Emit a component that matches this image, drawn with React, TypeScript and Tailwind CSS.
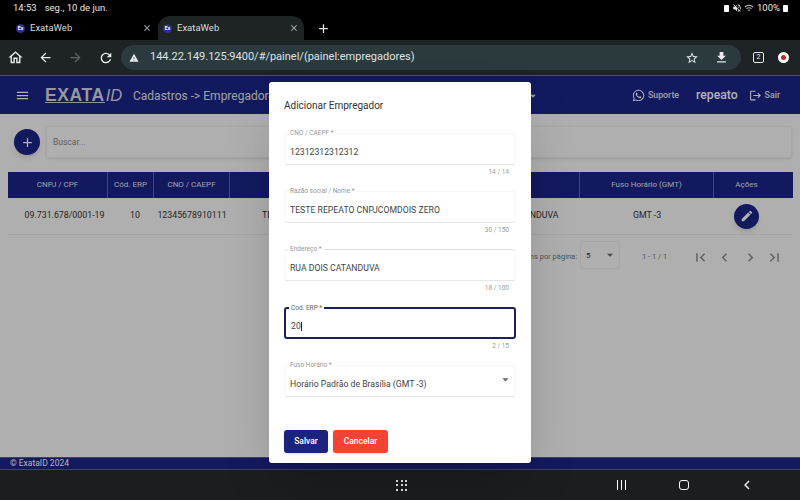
import React from 'react';
import { FaWhatsapp } from 'react-icons/fa';
import {
  MdAdd,
  MdArrowBack,
  MdArrowDropDown,
  MdArrowForward,
  MdChevronLeft,
  MdChevronRight,
  MdClose,
  MdEdit,
  MdFileDownload,
  MdFirstPage,
  MdLastPage,
  MdLogout,
  MdMenu,
  MdOutlineHome,
  MdOutlineWifi,
  MdRefresh,
  MdStarBorder,
  MdVolumeOff,
  MdWarning,
} from 'react-icons/md';

const Favicon: React.FC = () => (
  <span className="flex h-[9px] w-[9px] items-center justify-center rounded-full bg-[#2b2f8f] text-[5px] font-bold leading-none text-white">
    Ex
  </span>
);

const BrowserTab: React.FC<{ active?: boolean }> = ({ active }) => (
  <div
    className={`flex h-[24px] w-[146px] items-center rounded-t-xl px-[5px] ${
      active ? 'bg-[#1e2326]' : ''
    }`}
  >
    <Favicon />
    <span className="ml-[5px] flex-1 text-[9.5px] text-[#d9dcde]">ExataWeb</span>
    <MdClose className="text-[10px] text-[#b8bcbf]" />
  </div>
);

const Field: React.FC<{
  label: string;
  value?: string;
  hint?: string;
  focused?: boolean;
  select?: boolean;
  line?: boolean;
}> = ({ label, value, hint, focused, select, line }) => (
  <div className="h-[58px]">
    <div
      className={`relative flex h-[32px] items-center rounded-[3px] px-[5px] ${
        focused
          ? 'border-2 border-[#1a1f5e]'
          : 'border border-[#f7f7f7] border-b-[#e6e6e6]'
      } ${line ? 'border-t-[#e2e2e2]' : ''}`}
    >
      <span
        className={`absolute left-[3px] top-[-5px] bg-white px-[2px] text-[6.5px] leading-[8px] ${
          focused ? 'text-[#666]' : 'text-[#999]'
        }`}
      >
        {label}
      </span>
      <span className="flex-1 pt-[5px] text-[8.7px] leading-[12px] text-[#444]">
        {value}
        {focused && <span className="ml-[0.5px] inline-block h-[9px] w-px bg-[#1a1f5e] align-middle" />}
      </span>
      {select && <MdArrowDropDown className="mb-[3px] mr-[-3px] text-[15px] text-[#666]" />}
    </div>
    {hint && <div className="mt-[3px] pr-[7px] text-right text-[6.5px] leading-[8px] text-[#9a9a9a]">{hint}</div>}
  </div>
);

const columns = [
  { title: 'CNPJ / CPF', value: '09.731.678/0001-19', width: 'w-[100px]', cell: 'pl-[13px]' },
  { title: 'Cód. ERP', value: '10', width: 'w-[46px]', cell: 'pl-[8px]' },
  { title: 'CNO / CAEPF', value: '12345678910111', width: 'w-[76px]', cell: '' },
  { title: 'Razão social / Nome', value: 'TESTE REPEATO CNPJCOMDOIS ZERO', width: 'w-[216px]', cell: '' },
  { title: 'Endereço', value: 'RUA DOIS CATANDUVA', width: 'w-[134px]', cell: '' },
  { title: 'Fuso Horário (GMT)', value: 'GMT -3', width: 'w-[134px]', cell: '' },
];

export default function App() {
  return (
    <div className="flex h-[500px] w-[800px] flex-col overflow-hidden bg-black font-['Roboto',sans-serif]">
      {/* android status bar */}
      <div className="flex h-[16px] items-center justify-between pl-[13px] pr-[12px] text-[9.5px] text-[#e8e8e8]">
        <div className="flex gap-[8px]">
          <span>14:53</span>
          <span>seg., 10 de jun.</span>
        </div>
        <div className="flex items-center">
          <span className="h-[7px] w-[5px] rounded-[1px] bg-white" />
          <MdVolumeOff className="ml-[3px] text-[10px]" />
          <MdOutlineWifi className="ml-[2px] text-[10px] text-[#aaa]" />
          <span className="ml-[3px]">100%</span>
          <span className="ml-[3px] h-[7px] w-[5px] rounded-[1px] bg-white" />
        </div>
      </div>

      {/* tabs */}
      <div className="flex h-[24px] items-center pl-[11px]">
        <BrowserTab />
        <div className="ml-[1px]">
          <BrowserTab active />
        </div>
        <MdAdd className="ml-[12px] text-[15px] text-[#e8e8e8]" />
      </div>

      {/* browser toolbar */}
      <div className="flex h-[36px] items-center border-b border-[#4a4f66] bg-[#1e2326] text-[#e8eaed]">
        <MdOutlineHome className="ml-[7px] text-[17px]" />
        <MdArrowBack className="ml-[14px] text-[15px]" />
        <MdArrowForward className="ml-[15px] text-[15px] text-[#5f6468]" />
        <MdRefresh className="ml-[15px] text-[16px]" />
        <div className="ml-[7px] flex h-[25px] w-[620px] items-center rounded-full bg-[#2b3a3d] pl-[8px] pr-[12px]">
          <MdWarning className="text-[10px]" />
          <span className="ml-[11px] flex-1 text-[11px] text-[#dfe3e5]">144.22.149.125:9400/#/painel/(painel:empregadores)</span>
          <MdStarBorder className="text-[14px]" />
          <MdFileDownload className="ml-[15px] text-[15px]" />
        </div>
        <span className="ml-[12px] flex h-[11px] w-[11px] items-center justify-center rounded-[2px] border border-[#e8eaed] text-[7px]">
          2
        </span>
        <span className="ml-[14px] flex h-[11px] w-[11px] items-center justify-center rounded-full bg-white">
          <span className="h-[5px] w-[5px] rounded-full bg-[#c62828]" />
        </span>
      </div>

      {/* page */}
      <div className="relative flex flex-1 flex-col bg-[#ffffff]">
        <header className="flex h-[38px] items-center bg-[#1a2488] pl-[15px] pr-[20px] pt-[1px] text-white">
          <MdMenu className="text-[15px]" />
          <div className="ml-[15px] flex w-[78px] items-baseline">
            <span className="border-b border-white/80 font-['Liberation_Sans',sans-serif] text-[17.5px] font-bold leading-[14px] tracking-[0.6px] text-[#d8d8e8]">EXATA</span>
            <span className="ml-[1px] font-['Liberation_Sans',sans-serif] text-[16.5px] italic leading-[14px] text-[#d8d8e8]">ID</span>
          </div>
          <span className="ml-[10px] w-[393px] whitespace-nowrap text-[12px] text-[#e4e4ee]">Cadastros -&gt; Empregadores</span>
          <MdArrowDropDown className="text-[14px] text-[#ddd]" />
          <div className="flex-1" />
          <FaWhatsapp className="text-[13px]" />
          <span className="ml-[3px] text-[8.8px] font-medium text-[#e4e4ee]">Suporte</span>
          <span className="ml-[17px] text-[12.2px] font-medium">repeato</span>
          <MdLogout className="ml-[11px] text-[13px]" />
          <span className="ml-[3px] text-[8.8px] font-medium text-[#e4e4ee]">Sair</span>
        </header>

        <main className="flex-1 bg-[#fbfbfb] px-[8px]">
          <div className="mt-[12px] flex items-center">
            <button className="ml-[6px] flex h-[26px] w-[26px] items-center justify-center rounded-full bg-[#1a2488] text-white shadow-md">
              <MdAdd className="text-[15px]" />
            </button>
            <div className="ml-[6px] flex h-[32px] flex-1 items-center rounded-[3px] border border-[#f0f0f0] px-[6px] text-[8.5px] text-[#888] shadow-sm">
              Buscar...
            </div>
          </div>

          <div className="mt-[14px] flex">
            {columns.map((col) => (
              <div key={col.title} className={`${col.width} shrink-0`}>
                <div className="flex h-[26px] items-center justify-center border-r border-white/30 bg-[#1a2488] text-[8px] text-[#e4e4ee]">
                  {col.title}
                </div>
                <div className={`flex h-[37px] items-center justify-center whitespace-nowrap border-b border-[#eee] text-[8.8px] text-[#333] ${col.cell}`}>
                  {col.value}
                </div>
              </div>
            ))}
            <div className="w-[79px] shrink-0">
              <div className="flex h-[26px] items-center justify-center bg-[#1a2488] pr-[14px] text-[8px] text-[#e4e4ee]">Ações</div>
              <div className="flex h-[37px] items-center justify-center border-b border-[#eee] pr-[14px]">
                <button className="flex h-[25px] w-[25px] items-center justify-center rounded-full bg-[#1a2488] text-white shadow-md">
                  <MdEdit className="text-[14px]" />
                </button>
              </div>
            </div>
          </div>

          <div className="mt-[3px] flex h-[38px] items-center justify-end pr-[9px] text-[7.5px] text-[#777]">
            <span>Itens por página:</span>
            <div className="mb-[5px] ml-[3px] flex h-[28px] w-[40px] items-center justify-between rounded-[3px] border border-[#eee] pl-[5px] pr-[2px] text-[8px] text-[#333]">
              <span className="pt-[2px]">5</span>
              <MdArrowDropDown className="text-[14px] text-[#666]" />
            </div>
            <span className="ml-[22px] w-[50px]">1 - 1 / 1</span>
            <MdFirstPage className="text-[17px] text-[#888]" />
            <MdChevronLeft className="ml-[7px] text-[17px] text-[#888]" />
            <MdChevronRight className="ml-[9px] text-[17px] text-[#888]" />
            <MdLastPage className="ml-[7px] text-[17px] text-[#888]" />
          </div>
        </main>

        <footer className="flex h-[13px] items-center border-y border-[#5c6190] bg-[#1a2488] pl-[10px] text-[8.5px] text-white">
          © ExataID 2024
        </footer>

        {/* backdrop */}
        <div className="absolute inset-0 bg-black/30" />

        {/* modal */}
        <div className="absolute left-[269px] top-[6px] h-[381px] w-[262px] rounded-[3px] bg-white px-[15px] shadow-2xl">
          <h2 className="mt-[17px] h-[34px] text-[10px] leading-[13px] text-[#333]">Adicionar Empregador</h2>
          <Field label="CNO / CAEPF *" value="12312312312312" hint="14 / 14" />
          <Field label="Razão social / Nome *" value="TESTE REPEATO CNPJCOMDOIS ZERO" hint="30 / 150" />
          <Field label="Endereço *" value="RUA DOIS CATANDUVA" hint="18 / 100" line />
          <Field label="Cod. ERP *" value="20" hint="2 / 15" focused />
          <Field label="Fuso Horário *" value="Horário Padrão de Brasília (GMT -3)" select />
          <div className="mt-[7px] flex gap-[5px]">
            <button className="flex h-[23px] w-[44px] items-center justify-center rounded-[3px] bg-[#1a237e] text-[8.5px] font-medium text-white shadow-sm">
              Salvar
            </button>
            <button className="flex h-[23px] w-[55px] items-center justify-center rounded-[3px] bg-[#f44336] text-[8.5px] font-medium text-white shadow-sm">
              Cancelar
            </button>
          </div>
        </div>
      </div>

      {/* android nav bar */}
      <div className="flex h-[30px] items-center bg-[#1b1e20] text-[#e8e8e8]">
        <div className="ml-[396px] grid grid-cols-3 gap-[2.5px]">
          {[0, 1, 2, 3, 4, 5, 6, 7, 8].map((i) => (
            <span key={i} className="h-[2px] w-[2px] bg-[#e8e8e8]" />
          ))}
        </div>
        <div className="ml-[210px] flex gap-[3px]">
          <span className="h-[10px] w-px bg-white" />
          <span className="h-[10px] w-px bg-white" />
          <span className="h-[10px] w-px bg-white" />
        </div>
        <span className="ml-[53px] h-[10px] w-[10px] rounded-[3px] border border-white" />
        <MdChevronLeft className="ml-[49px] text-[18px]" />
      </div>
    </div>
  );
}
